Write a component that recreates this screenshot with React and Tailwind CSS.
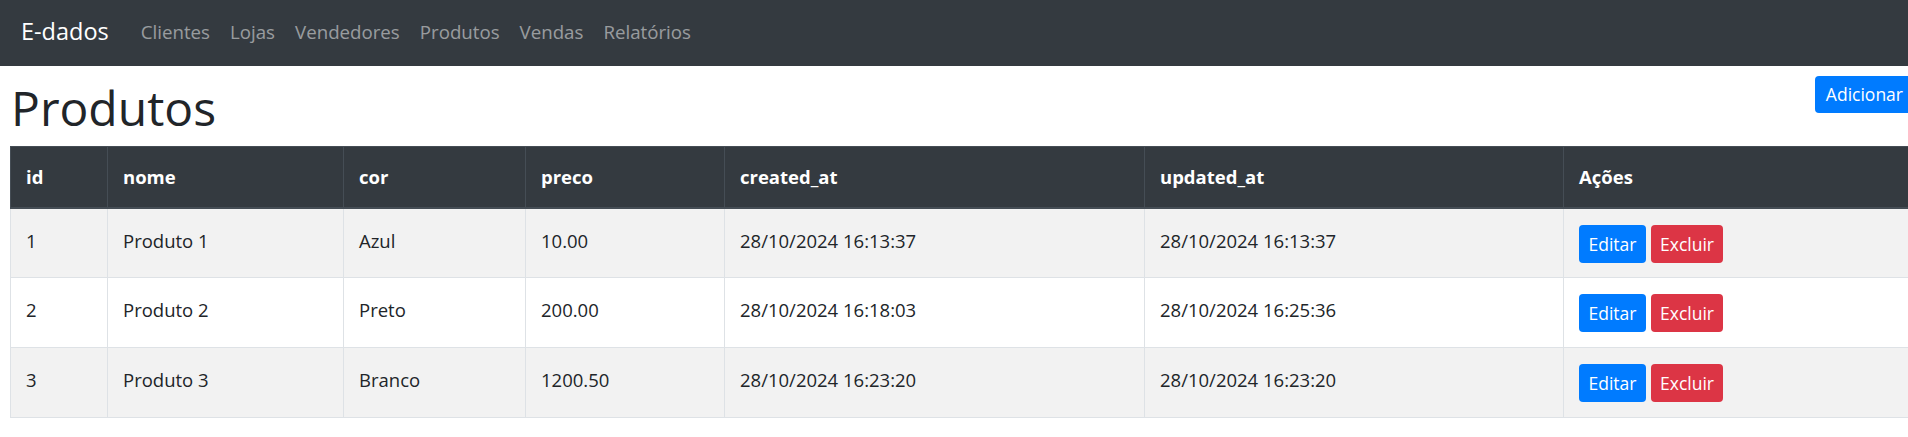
import React from 'react';

const links = ['Clientes', 'Lojas', 'Vendedores', 'Produtos', 'Vendas', 'Relatórios'];

const produtos = [
    { id: 1, nome: 'Produto 1', cor: 'Azul', preco: '10.00', created: '28/10/2024 16:13:37', updated: '28/10/2024 16:13:37' },
    { id: 2, nome: 'Produto 2', cor: 'Preto', preco: '200.00', created: '28/10/2024 16:18:03', updated: '28/10/2024 16:25:36' },
    { id: 3, nome: 'Produto 3', cor: 'Branco', preco: '1200.50', created: '28/10/2024 16:23:20', updated: '28/10/2024 16:23:20' },
];

const App = () => {
    return (
        <div className="w-full overflow-hidden bg-white text-[#212529] font-['Open_Sans',sans-serif]">
            {/* Navbar */}
            <nav className="h-[66px] bg-[#343a40] flex items-center px-[21px]">
                <span className="text-white text-[23.5px] mr-[22px] pb-[2px]">E-dados</span>
                <div className="flex items-center">
                    {links.map((l) => (
                        <a key={l} className="text-[18.7px] text-white/50 px-[10px] pb-[2px]">{l}</a>
                    ))}
                </div>
            </nav>

            <div className="w-[1922px] pl-[10px]">
                {/* Title row */}
                <div className="flex justify-between items-start pt-[10px] pr-[8px]">
                    <h1 className="text-[48px] font-medium leading-[70px] pl-[1px] -mt-[3px] mb-[3px]">Produtos</h1>
                    <button className="bg-[#007bff] text-white text-[17.5px] rounded-[4px] h-[37px] px-[11px] leading-none">Adicionar</button>
                </div>

                {/* Table */}
                <table className="table-fixed w-[1902px] border-collapse text-[18.5px] leading-[30px] border border-[#dee2e6]">
                    <thead>
                        <tr className="bg-[#343a40] text-white h-[61px]">
                            <th className="w-[97px] text-left font-bold px-[15px] border border-[#454d55] border-b-2">id</th>
                            <th className="w-[236px] text-left font-bold px-[15px] border border-[#454d55] border-b-2">nome</th>
                            <th className="w-[182px] text-left font-bold px-[15px] border border-[#454d55] border-b-2">cor</th>
                            <th className="w-[199px] text-left font-bold px-[15px] border border-[#454d55] border-b-2">preco</th>
                            <th className="w-[420px] text-left font-bold px-[15px] border border-[#454d55] border-b-2">created_at</th>
                            <th className="w-[419px] text-left font-bold px-[15px] border border-[#454d55] border-b-2">updated_at</th>
                            <th className="text-left font-bold px-[15px] border border-[#454d55] border-b-2">Ações</th>
                        </tr>
                    </thead>
                    <tbody>
                        {produtos.map((p, i) => (
                            <tr key={p.id} className={i % 2 === 0 ? 'bg-[#f2f2f2] h-[70px]' : 'bg-white h-[70px]'}>
                                <td className="align-top pt-[17px] px-[15px] border border-[#dee2e6]">{p.id}</td>
                                <td className="align-top pt-[17px] px-[15px] border border-[#dee2e6]">{p.nome}</td>
                                <td className="align-top pt-[17px] px-[15px] border border-[#dee2e6]">{p.cor}</td>
                                <td className="align-top pt-[17px] px-[15px] border border-[#dee2e6]">{p.preco}</td>
                                <td className="align-top pt-[17px] px-[15px] border border-[#dee2e6]">{p.created}</td>
                                <td className="align-top pt-[17px] px-[15px] border border-[#dee2e6]">{p.updated}</td>
                                <td className="align-top pt-[16px] px-[15px] border border-[#dee2e6]">
                                    <div className="flex gap-[5px]">
                                        <button className="w-[67px] h-[38px] rounded-[4px] bg-[#007bff] text-white text-[17.5px]">Editar</button>
                                        <button className="w-[72px] h-[38px] rounded-[4px] bg-[#dc3545] text-white text-[17.5px]">Excluir</button>
                                    </div>
                                </td>
                            </tr>
                        ))}
                    </tbody>
                </table>
            </div>
        </div>
    );
};

export default App;
